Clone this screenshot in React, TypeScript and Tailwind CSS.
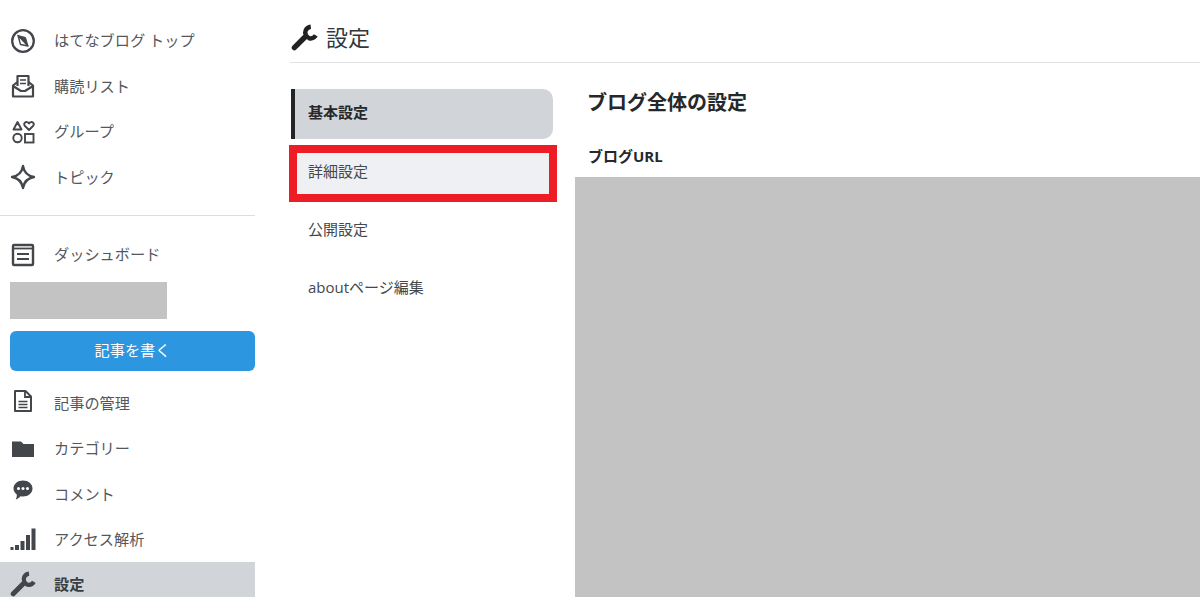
import React from "react";

const Wrench = ({ className }: { className?: string }) => (
  <svg viewBox="0 0 28 28" className={className} fill="none" stroke="currentColor">
    <path d="M3.500 24.500 14 14" strokeWidth="5.500" strokeLinecap="round" />
    <path d="M20.500 2.800a6.600 6.600 0 0 0-5.200 3.600 6.400 6.400 0 0 0 3.600 8.400 6.600 6.600 0 0 0 6.800-3" strokeWidth="4.600" />
  </svg>
);

const icons: Record<string, React.ReactNode> = {
  compass: (
    <svg viewBox="0 0 24 24" className="w-6 h-6" fill="none" stroke="currentColor">
      <circle cx="12" cy="12" r="10.800" strokeWidth="2.300" />
      <path d="M7 6.500 17 17 14.500 8.500Z" fill="currentColor" strokeWidth="1" strokeLinejoin="round" />
      <path d="M7 6.500 17 17 9.500 15.500Z" strokeWidth="1.400" strokeLinejoin="round" />
    </svg>
  ),
  inbox: (
    <svg viewBox="0 0 24 24" className="w-6 h-6" fill="none" stroke="currentColor" strokeWidth="2.200">
      <path d="M6.500 12V2h11v10" strokeLinejoin="round" />
      <path d="M9 6h6M9 9.500h6" strokeWidth="1.600" />
      <path d="M6.500 8 2 11.500V22.500h20V11.500L17.500 8" strokeLinejoin="round" />
      <path d="M2 12 10 17h4l8-5" strokeLinejoin="round" />
    </svg>
  ),
  shapes: (
    <svg viewBox="0 0 24 24" className="w-6 h-6" fill="none" stroke="currentColor" strokeWidth="1.900">
      <path d="M6.500 2 10.500 9.500H2.500Z" strokeLinejoin="round" />
      <path d="M18 10 14 6c-1.800-2 0-4.500 2-4 1 .2 1.600 1 2 1.500.4-.5 1-1.300 2-1.500 2-.5 3.800 2 2 4Z" strokeLinejoin="round" />
      <circle cx="6.500" cy="18" r="4.200" />
      <rect x="14" y="14" width="8.500" height="8.500" />
    </svg>
  ),
  sparkle: (
    <svg viewBox="0 0 26 26" className="w-[26px] h-[26px] shrink-0" fill="none" stroke="currentColor" strokeWidth="2.300">
      <path d="M13 2c1 6 5 10 11 11-6 1-10 5-11 11-1-6-5-10-11-11 6-1 10-5 11-11Z" strokeLinejoin="round" />
    </svg>
  ),
  news: (
    <svg viewBox="0 0 24 24" className="w-6 h-6" fill="none" stroke="currentColor">
      <rect x="2" y="2" width="20" height="20" rx="1" strokeWidth="2.400" />
      <path d="M2 5.500h20" strokeWidth="1.800" />
      <path d="M6 11h12M6 16h12" strokeWidth="2" />
    </svg>
  ),
  file: (
    <svg viewBox="0 0 24 24" className="w-6 h-6" fill="none" stroke="currentColor" strokeWidth="2">
      <path d="M4 2h10.500L20 7.500V22H4Z" strokeLinejoin="round" />
      <path d="M14 2v6h6" strokeWidth="1.800" />
      <path d="M7.500 12.500h9M7.500 15.500h9M7.500 18.500h9" strokeWidth="1.300" />
    </svg>
  ),
  folder: (
    <svg viewBox="0 0 24 24" className="w-6 h-6" fill="currentColor">
      <path d="M2 4.500h8l2.500 2.500H23V20H1V4.500Z" />
    </svg>
  ),
  comment: (
    <svg viewBox="0 0 24 24" className="w-6 h-6">
      <path fill="currentColor" d="M12 .5c5.200 0 9.500 3.500 9.500 8s-4.300 8-9.500 8c-.9 0-1.700-.1-2.500-.3-1.200 1.300-3 2.800-4.800 3.300.7-1.200 1.300-3 1.100-5C3.800 13 2.500 10.900 2.500 8.500c0-4.500 4.300-8 9.500-8Z" />
      <circle cx="7.500" cy="8.500" r="1.500" fill="#fff" />
      <circle cx="12" cy="8.500" r="1.500" fill="#fff" />
      <circle cx="16.500" cy="8.500" r="1.500" fill="#fff" />
    </svg>
  ),
  signal: (
    <svg viewBox="0 0 26 24" className="w-[26px] h-6 shrink-0" fill="currentColor">
      <rect x="0.500" y="19" width="3" height="3" />
      <rect x="5" y="17" width="4" height="5" />
      <rect x="10.500" y="13" width="4" height="9" />
      <rect x="16" y="7" width="4" height="15" />
      <rect x="21.500" y="0.500" width="4" height="21.500" />
    </svg>
  ),
  wrench: <Wrench className="w-[26px] h-[26px] shrink-0" />,
};

const NavItem = ({ icon, label, active, iconUp }: { icon: string; label: string; active?: boolean; iconUp?: boolean }) => (
  <div className={`flex items-center h-[45.5px] pl-[11px] text-[15.200px] ${active ? "-mt-px bg-[#d1d5d9] font-bold text-[#3a3e42]" : "text-[#54585c]"}`}>
    <span className={`w-6 flex justify-center text-[#43474b] shrink-0 ${iconUp ? "pb-1" : ""}`}>{icons[icon]}</span>
    <span className="ml-[19px]">{label}</span>
  </div>
);

export default function App() {
  return (
    <div className="flex h-[597px] w-[1200px] overflow-hidden bg-white font-['Open_Sans','Noto_Sans_CJK_JP',sans-serif]">
      <aside className="w-[255px] shrink-0 pt-[18px]">
        <NavItem icon="compass" label="はてなブログ トップ" />
        <NavItem icon="inbox" label="購読リスト" />
        <NavItem icon="shapes" label="グループ" />
        <NavItem icon="sparkle" label="トピック" />
        <div className="border-t border-[#dcdddd] mt-[15px] mb-[16px]" />
        <NavItem icon="news" label="ダッシュボード" />
        <div className="ml-[10px] w-[157px] h-[37px] bg-[#c3c3c3] mt-[4px]" />
        <button className="block ml-[10px] w-[245px] h-[40px] mt-[12px] mb-[10px] rounded-md bg-[#2d96e0] text-white text-[15.200px]">
          記事を書く
        </button>
        <NavItem icon="file" label="記事の管理" iconUp />
        <NavItem icon="folder" label="カテゴリー" />
        <NavItem icon="comment" label="コメント" iconUp />
        <NavItem icon="signal" label="アクセス解析" />
        <NavItem icon="wrench" label="設定" active />
      </aside>

      <main className="flex-1 pl-[35px] min-w-0">
        <header className="flex items-center h-[63px] pt-[19px] pb-[7px] border-b border-[#dfe1e4] text-[#33373b]">
          <span className="text-[#1f2123] ml-[1px] mr-[8px]"><Wrench className="w-[27px] h-[27px]" /></span>
          <h1 className="text-[22px] font-normal">設定</h1>
        </header>
        <div className="flex">
          <nav className="w-[262px] ml-[1px] mt-[26px] shrink-0 flex flex-col gap-[8.330px] text-[15px] text-[#44484c]">
            <div className="h-[50px] flex items-center pl-[13px] pb-[3px] bg-[#d1d5d9] border-l-[4px] border-[#222426] rounded-r-[10px] font-bold text-[#26282a]">基本設定</div>
            <div className="relative h-[50px] flex items-center pl-[17px] pb-[3px] bg-[#eff0f4]">
              詳細設定
              <div className="absolute left-[-2px] right-[-4px] top-[-2px] bottom-[-5px] border-[8px] border-[#ee1c25]" />
            </div>
            <div className="h-[50px] flex items-center pl-[17px] pb-[3px]">公開設定</div>
            <div className="h-[50px] flex items-center pl-[17px] pb-[3px]">aboutページ編集</div>
          </nav>
          <section className="flex-1 ml-[22px] min-w-0">
            <h2 className="pl-[12px] mt-[26px] text-[20px] leading-[27px] font-bold text-[#26282a]">ブログ全体の設定</h2>
            <h3 className="pl-[13px] mt-[30px] text-[15px] leading-[20px] font-bold text-[#26282a]">ブログURL</h3>
            <div className="mt-[11px] h-[420px] bg-[#c3c3c3]" />
          </section>
        </div>
      </main>
    </div>
  );
}
